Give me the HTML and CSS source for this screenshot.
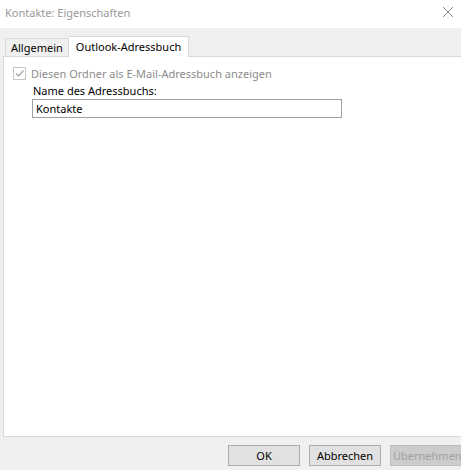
FILE: index.html
```html
<!DOCTYPE html>
<html>
<head><meta charset="utf-8"><link rel="stylesheet" href="styles.css"></head>
<body>
<div class="win">
  <div class="titlebar">
    <span class="title">Kontakte: Eigenschaften</span>
    <svg class="close" width="12" height="12" viewBox="0 0 12 12"><path d="M1 1L11 11M11 1L1 11" stroke="#8a8a8a" stroke-width="1"/></svg>
  </div>
  <div class="body">
    <div class="tabs">
      <div class="tab">Allgemein</div>
      <div class="tab active">Outlook-Adressbuch</div>
    </div>
    <div class="panel">
      <label class="check">
        <span class="box"><svg width="11" height="11" viewBox="0 0 11 11"><path d="M2 5.5L4.5 8L9.5 2.5" fill="none" stroke="#a8a8a8" stroke-width="1.3"/></svg></span>
        <span class="ctext">Diesen Ordner als E-Mail-Adressbuch anzeigen</span>
      </label>
      <div class="field">
        <div class="flabel">Name des Adressbuchs:</div>
        <div class="input">Kontakte</div>
      </div>
    </div>
    <div class="buttons">
      <div class="btn">OK</div>
      <div class="btn">Abbrechen</div>
      <div class="btn disabled">Übernehmen</div>
    </div>
  </div>
</div>
</body>
</html>
```
FILE: styles.css
```css
html, body { margin: 0; padding: 0; }
body {
  width: 461px; height: 470px; overflow: hidden;
  font-family: "Noto Sans", "Open Sans", sans-serif;
  font-size: 11px; color: #000;
  background: #f0f0f0;
}
.win { display: flex; flex-direction: column; height: 470px; }
.titlebar {
  height: 28px; background: #fff; display: flex; align-items: center;
  justify-content: space-between; padding: 0 5px 4px 5px; box-sizing: border-box;
}
.title { color: #999; font-size: 11px; }
.close { margin-right: 2px; }
.body { flex: 1; display: flex; flex-direction: column; padding: 7px 0 0 3px; }
.tabs { display: flex; align-items: flex-end; height: 21px; padding-left: 2px; }
.tab {
  padding: 0 5px 0 5px;
  border: 1px solid #d9d9d9; border-bottom: none; background: #f0f0f0;
  box-sizing: border-box; height: 18px; line-height: 17px;
}
.tab.active {
  background: #fff; height: 21px; line-height: 19px; padding: 0 7px;
  margin-bottom: -1px; position: relative; z-index: 1; border-left: none;
}
.panel {
  height: 381px; background: #fff; border: 1px solid #d9d9d9; border-right: none;
  box-sizing: border-box; padding: 8px 0 0 9px;
}
.check { display: flex; align-items: center; height: 16px; }
.box {
  width: 11px; height: 11px; border: 1px solid #c8c8c8; display: flex;
  align-items: center; justify-content: center; margin-right: 5px;
}
.ctext { color: #8c8c8c; }
.field { padding-left: 19px; padding-top: 1px; }
.flabel { height: 17px; line-height: 17px; padding-left: 1px; }
.input {
  width: 310px; height: 19px; border: 1px solid #a0a0a0; box-sizing: border-box;
  line-height: 17px; padding-left: 3px; background: #fff;
}
.buttons { display: flex; gap: 9px; padding: 8px 0 0 225px; }
.btn {
  width: 72px; height: 21px; box-sizing: border-box; flex: none;
  border: 1px solid #adadad; background: #e1e1e1;
  text-align: center; line-height: 19px;
}
.btn.disabled { color: #a0a0a0; border-color: #bfbfbf; background: #cccccc; width: 75px; padding-left: 2px; text-align: left; }
```
